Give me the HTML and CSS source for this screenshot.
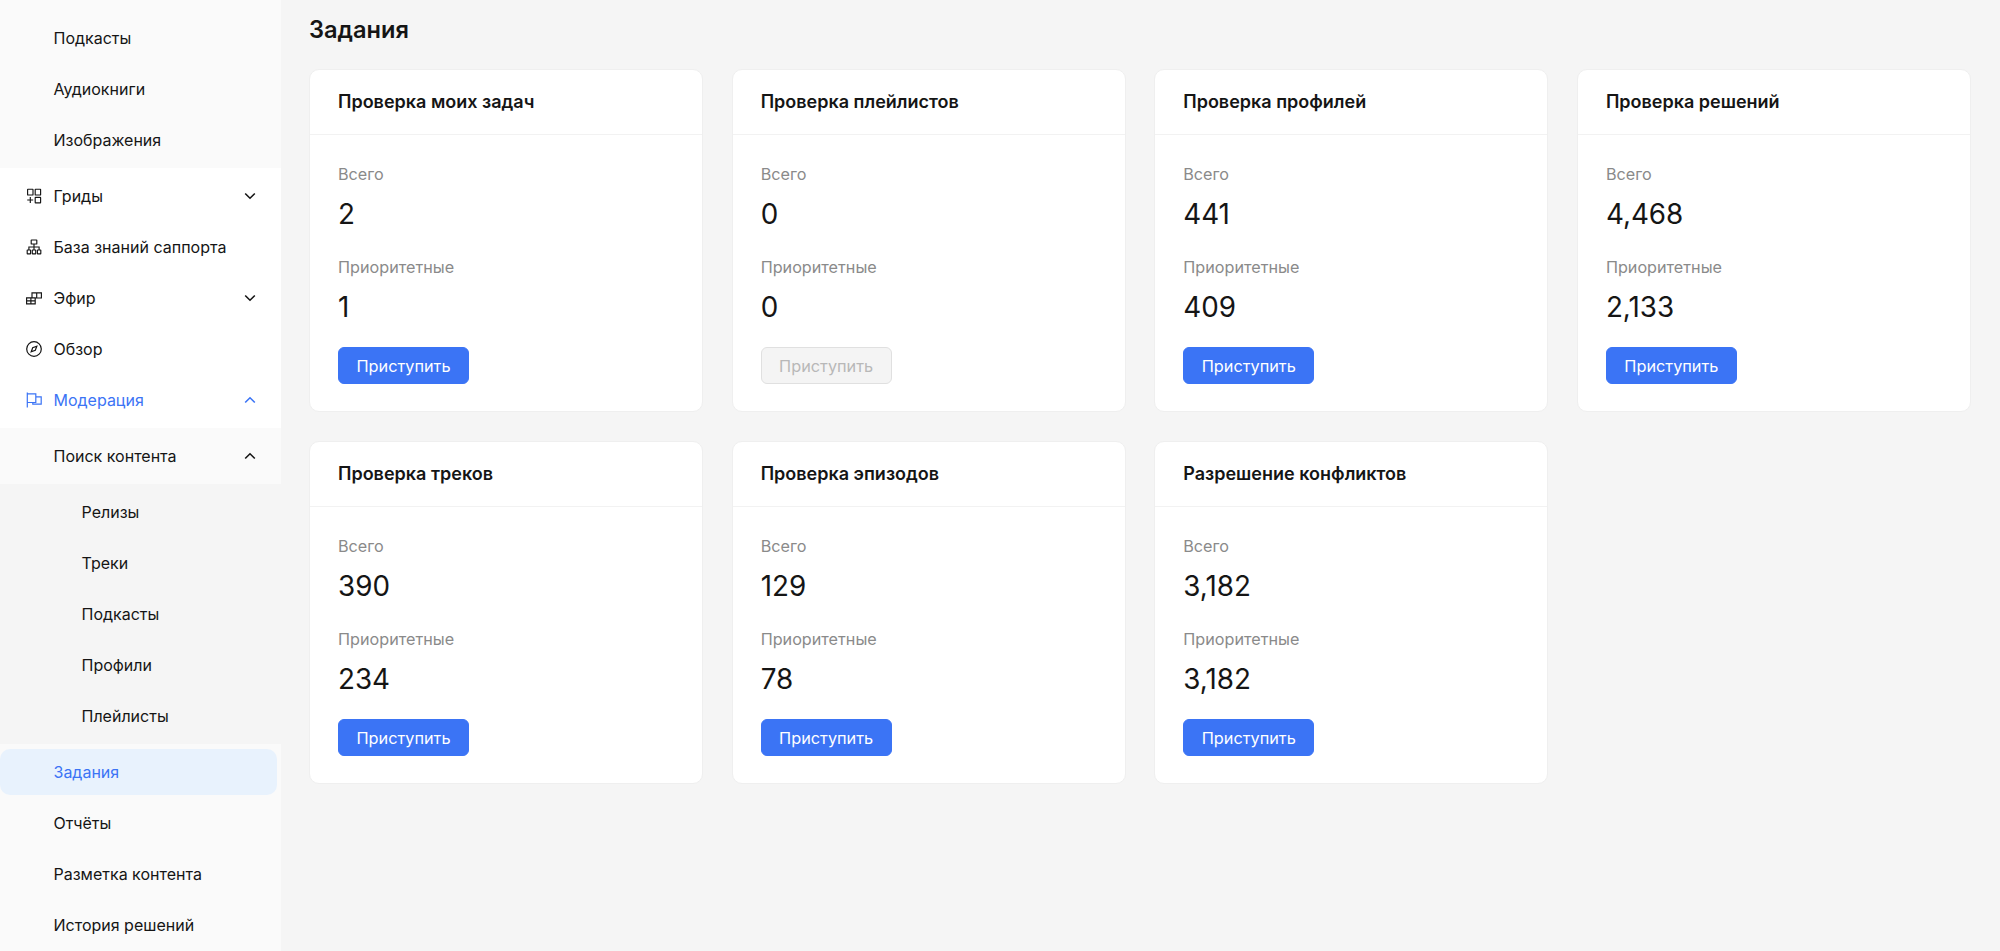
FILE: index.html
```html
<!DOCTYPE html>
<html lang="ru">
<head>
<meta charset="utf-8">
<title>Задания</title>
<link rel="stylesheet" href="styles.css">
</head>
<body>
<div class="app">
  <nav class="sidebar">
    <div class="group group-top">
      <a class="item"><span class="label">Подкасты</span></a>
      <a class="item"><span class="label">Аудиокниги</span></a>
      <a class="item"><span class="label">Изображения</span></a>
    </div>
    <div class="top-items">
      <a class="item"><svg class="icon" viewBox="0 0 16 16" fill="none" stroke="currentColor" stroke-width="1.15"><rect x="1.600" y="1.200" width="5.400" height="5.800" rx=".3"/><rect x="9.200" y="1.200" width="5.400" height="5.800" rx=".3"/><rect x="9.200" y="9.400" width="5.400" height="5.400" rx=".3"/><path d="M4.300 9v6M1.200 12h6"/></svg><span class="label">Гриды</span><svg class="chev" viewBox="0 0 12 8" fill="none" stroke="currentColor" stroke-width="1.6"><path d="M1.200 1.500 6 6.200l4.800-4.700"/></svg></a>
      <a class="item"><svg class="icon" viewBox="0 0 16 16" fill="none" stroke="currentColor" stroke-width="1.15"><rect x="5.200" y="1" width="5.600" height="4" rx=".3"/><path d="M8 5v3M2.900 11V8h10.200v3M8 8v3"/><rect x="1.200" y="11" width="3.400" height="3.800" rx=".3"/><rect x="6.300" y="11" width="3.400" height="3.800" rx=".3"/><rect x="11.400" y="11" width="3.400" height="3.800" rx=".3"/></svg><span class="label">База знаний саппорта</span></a>
      <a class="item"><svg class="icon" viewBox="0 0 16 16" fill="none" stroke="currentColor" stroke-width="1.15"><path d="M.6 7.800h8.600v6H.6zM4.900 7.800v6M.6 10.800h8.600M6 7.800V2.800h9.400v5.200H9.200M10.700 2.800v5.200"/></svg><span class="label">Эфир</span><svg class="chev" viewBox="0 0 12 8" fill="none" stroke="currentColor" stroke-width="1.6"><path d="M1.200 1.500 6 6.200l4.800-4.700"/></svg></a>
      <a class="item"><svg class="icon" viewBox="0 0 16 16" fill="none" stroke="currentColor" stroke-width="1.200"><circle cx="8" cy="8" r="7.300"/><path d="M10.800 5.200 9.300 9.300 5.200 10.800 6.700 6.700z"/></svg><span class="label">Обзор</span></a>
      <a class="item active"><svg class="icon" viewBox="0 0 16 16" fill="none" stroke="currentColor" stroke-width="1.200"><path d="M1.300.4v15.200M1.300 1.800h8.500v8.700H1.300M9.800 4.800h5.400v7.400H6.800v-1.700"/></svg><span class="label">Модерация</span><svg class="chev" viewBox="0 0 12 8" fill="none" stroke="currentColor" stroke-width="1.6"><path d="M1.200 6.500 6 1.800l4.800 4.700"/></svg></a>
    </div>
    <div class="group group-mod">
      <a class="item item-search"><span class="label">Поиск контента</span><svg class="chev" viewBox="0 0 12 8" fill="none" stroke="currentColor" stroke-width="1.6"><path d="M1.200 6.500 6 1.800l4.800 4.700"/></svg></a>
      <div class="subgroup">
        <a class="item"><span class="label label-deep">Релизы</span></a>
        <a class="item"><span class="label label-deep">Треки</span></a>
        <a class="item"><span class="label label-deep">Подкасты</span></a>
        <a class="item"><span class="label label-deep">Профили</span></a>
        <a class="item"><span class="label label-deep">Плейлисты</span></a>
      </div>
      <div class="rest">
        <a class="item current"><span class="label">Задания</span></a>
        <a class="item"><span class="label">Отчёты</span></a>
        <a class="item"><span class="label">Разметка контента</span></a>
        <a class="item"><span class="label">История решений</span></a>
      </div>
    </div>
  </nav>
  <main class="main">
    <h1 class="title">Задания</h1>
    <div class="cards">
      <section class="card"><h2 class="card-title">Проверка моих задач</h2><div class="card-body"><div class="stat-label">Всего</div><div class="stat-value">2</div><div class="stat-label">Приоритетные</div><div class="stat-value">1</div><button class="btn">Приступить</button></div></section>
      <section class="card"><h2 class="card-title">Проверка плейлистов</h2><div class="card-body"><div class="stat-label">Всего</div><div class="stat-value">0</div><div class="stat-label">Приоритетные</div><div class="stat-value">0</div><button class="btn" disabled>Приступить</button></div></section>
      <section class="card"><h2 class="card-title">Проверка профилей</h2><div class="card-body"><div class="stat-label">Всего</div><div class="stat-value">441</div><div class="stat-label">Приоритетные</div><div class="stat-value">409</div><button class="btn">Приступить</button></div></section>
      <section class="card"><h2 class="card-title">Проверка решений</h2><div class="card-body"><div class="stat-label">Всего</div><div class="stat-value">4,468</div><div class="stat-label">Приоритетные</div><div class="stat-value">2,133</div><button class="btn">Приступить</button></div></section>
      <section class="card"><h2 class="card-title">Проверка треков</h2><div class="card-body"><div class="stat-label">Всего</div><div class="stat-value">390</div><div class="stat-label">Приоритетные</div><div class="stat-value">234</div><button class="btn">Приступить</button></div></section>
      <section class="card"><h2 class="card-title">Проверка эпизодов</h2><div class="card-body"><div class="stat-label">Всего</div><div class="stat-value">129</div><div class="stat-label">Приоритетные</div><div class="stat-value">78</div><button class="btn">Приступить</button></div></section>
      <section class="card"><h2 class="card-title">Разрешение конфликтов</h2><div class="card-body"><div class="stat-label">Всего</div><div class="stat-value">3,182</div><div class="stat-label">Приоритетные</div><div class="stat-value">3,182</div><button class="btn">Приступить</button></div></section>
    </div>
  </main>
</div>
</body>
</html>
```
FILE: styles.css
```css
* { box-sizing: border-box; }
html, body { margin: 0; height: 100%; overflow: hidden; }
body { font-family: Inter, "Noto Sans", sans-serif; color: #151515; background: #f5f5f5; }
.app { display: flex; height: 951px; overflow: hidden; }
.sidebar { width: 281px; flex: none; background: #fff; font-size: 16px; display: flex; flex-direction: column; }
.group { background: #fafafa; }
.group-top { padding: 15px 0 5px; display: flex; flex-direction: column; gap: 5px; }
.top-items { padding: 5px 0; display: flex; flex-direction: column; gap: 5px; }
.item { display: flex; align-items: center; height: 46px; padding: 0 25px 0 25.5px; flex: none; }
.icon { width: 16px; height: 16px; flex: none; margin-right: 12px; }
.label { flex: 1; white-space: nowrap; }
.group .label { padding-left: 28px; }
.group .label-deep { padding-left: 56px; }
.chev { width: 12px; height: 8px; flex: none; }
.active { color: #3b74f5; }
.group-mod { flex: 1; }
.item-search { height: 56px; }
.subgroup { background: #f5f5f5; padding: 5px 0; display: flex; flex-direction: column; gap: 5px; }
.rest { padding-top: 5px; display: flex; flex-direction: column; gap: 5px; }
.current { background: #e8f2fd; color: #3b74f5; margin-right: 4px; border-radius: 10px; }
.main { flex: 1; padding: 0 29px 0 28px; min-width: 0; }
.title { margin: 0; height: 69px; padding-top: 15px; font-size: 23.600px; line-height: 30px; font-weight: 600; }
.cards { display: grid; grid-template-columns: repeat(4, 1fr); gap: 29px 28.500px; }
.card { background: #fff; border: 1px solid #efefef; border-radius: 10px; height: 343px; }
.card-title { margin: 0; height: 65px; padding: 0 28px; border-bottom: 1.5px solid #f2f2f2; font-size: 18px; line-height: 63px; font-weight: 600; white-space: nowrap; }
.card-body { padding: 28px 28px 0; }
.stat-label { color: #8a8a8a; font-size: 16.200px; line-height: 22px; }
.stat-value { font-size: 27.800px; line-height: 40px; margin: 8.500px 0 22.500px; }
.btn { display: block; width: 131px; height: 37px; margin-top: -2px; padding: 0; border: 1px solid #3b74f5; border-radius: 6px; background: #3b74f5; color: #fff; font: 16.300px Inter, sans-serif; }
.btn:disabled { background: #f4f4f4; border-color: #e0e0e0; color: #b8b8b8; }
```
